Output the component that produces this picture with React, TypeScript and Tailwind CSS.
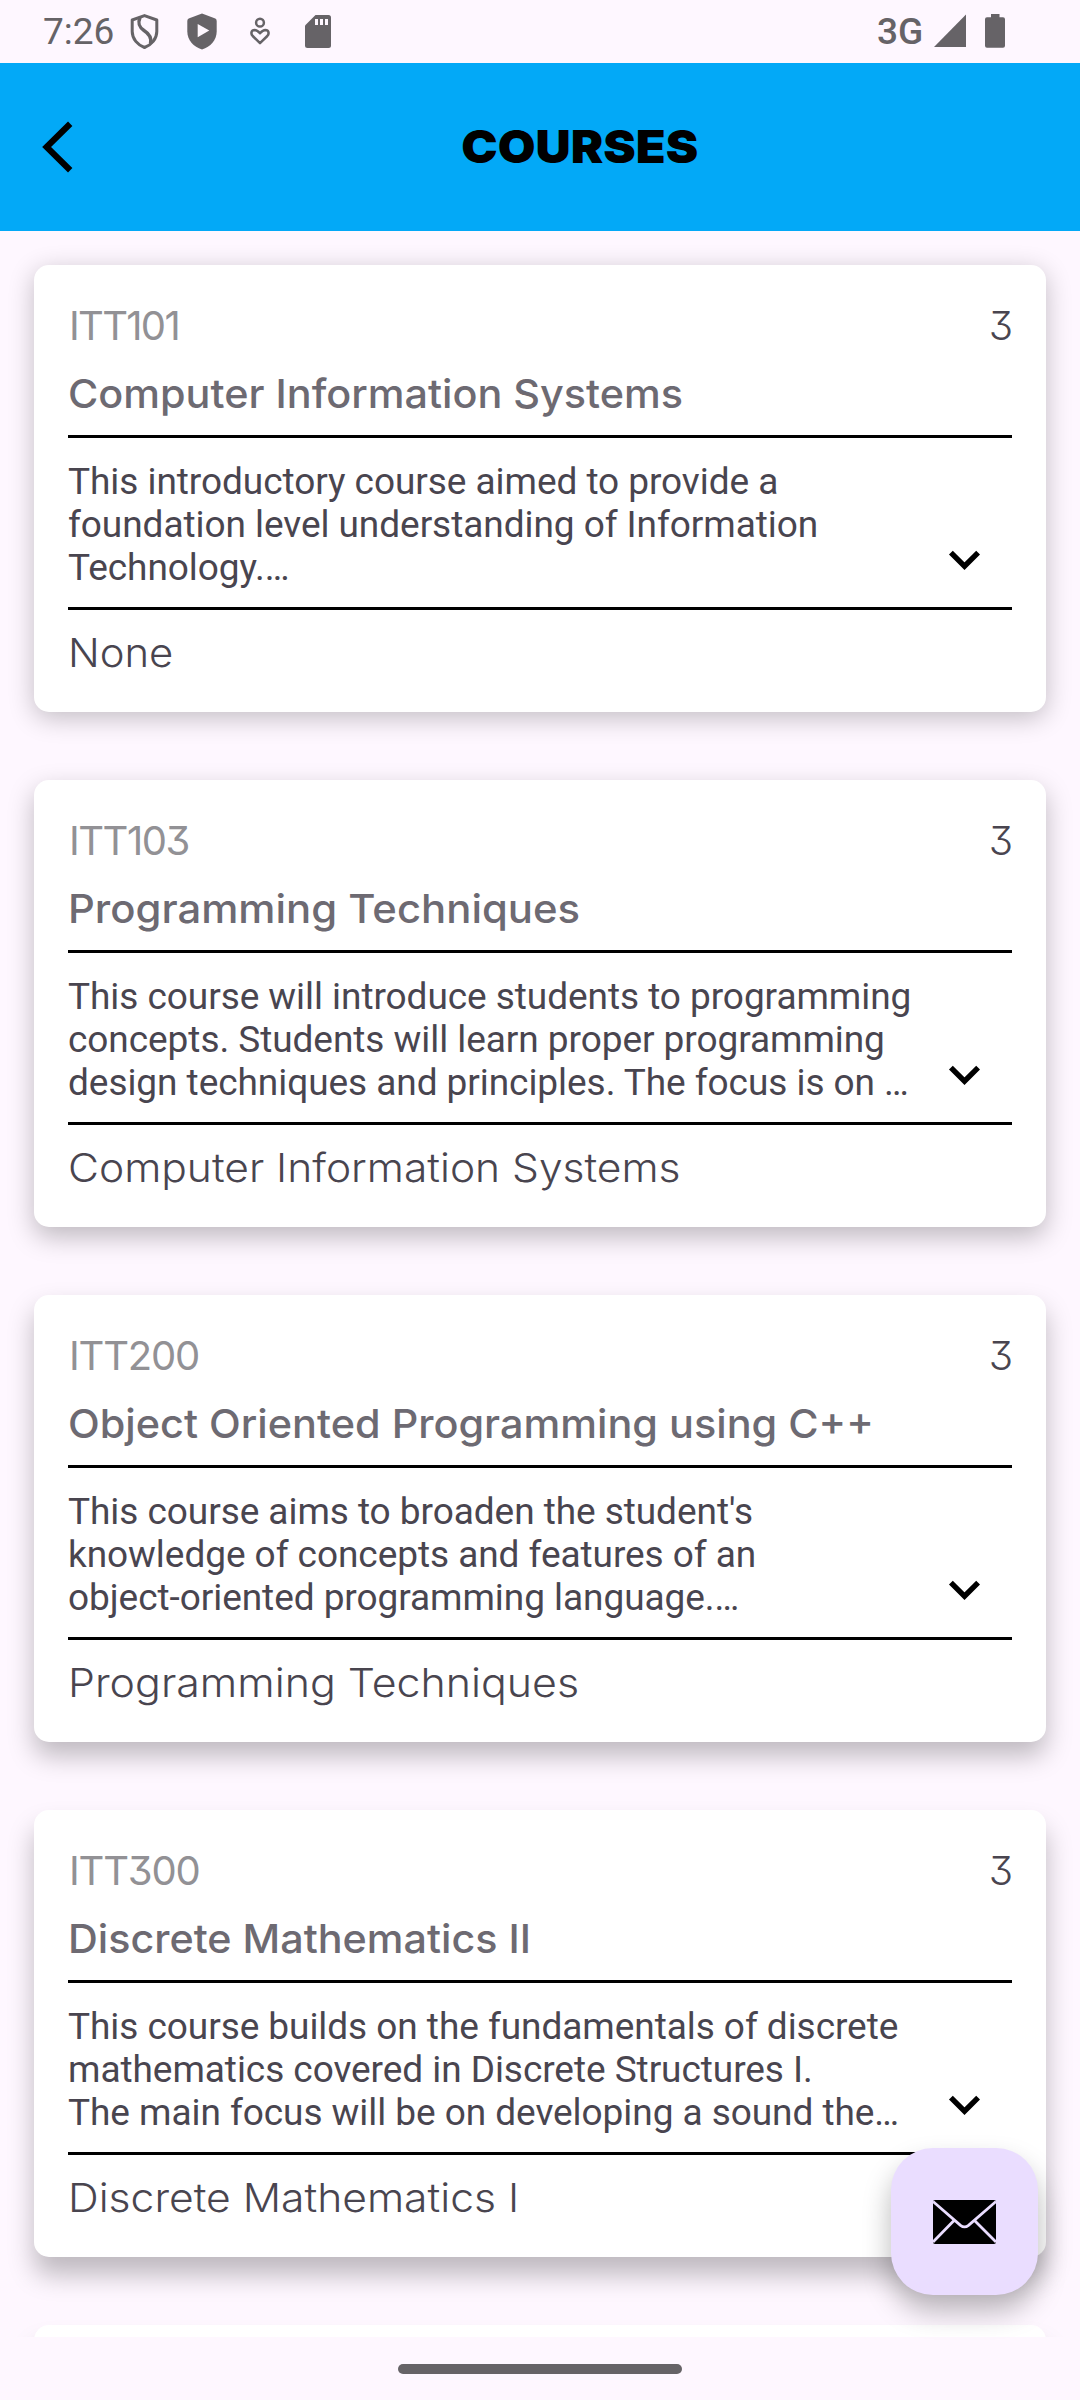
import React from "react";

type Course = {
  code: string;
  codeClass: string;
  credits: number;
  title: string;
  titleClass: string;
  description: string[];
  prerequisite: string;
  prerequisiteClass: string;
  shadowClass: string;
};

const courses: Course[] = [
  {
    code: "ITT101",
    codeClass: "tracking-[-1.7px]",
    credits: 3,
    title: "Computer Information Systems",
    titleClass: "scale-x-[1.034]",
    description: [
      "This introductory course aimed to provide a",
      "foundation level understanding of Information",
      "Technology.…",
    ],
    prerequisite: "None",
    prerequisiteClass: "scale-x-[1.045]",
    shadowClass: "shadow-[0_6px_26px_rgba(0,0,0,0.24)]",
  },
  {
    code: "ITT103",
    codeClass: "tracking-[-1.5px]",
    credits: 3,
    title: "Programming Techniques",
    titleClass: "scale-x-[1.046]",
    description: [
      "This course will introduce students to programming",
      "concepts. Students will learn proper programming",
      "design techniques and principles. The focus is on …",
    ],
    prerequisite: "Computer Information Systems",
    prerequisiteClass: "scale-x-[1.063]",
    shadowClass: "shadow-[0_10px_26px_rgba(0,0,0,0.25)]",
  },
  {
    code: "ITT200",
    codeClass: "tracking-[-1.2px]",
    credits: 3,
    title: "Object Oriented Programming using C++",
    titleClass: "scale-x-[1.035]",
    description: [
      "This course aims to broaden the student's",
      "knowledge of concepts and features of an",
      "object-oriented programming language.…",
    ],
    prerequisite: "Programming Techniques",
    prerequisiteClass: "scale-x-[1.072]",
    shadowClass: "shadow-[0_14px_26px_rgba(0,0,0,0.25)]",
  },
  {
    code: "ITT300",
    codeClass: "tracking-[-1.2px]",
    credits: 3,
    title: "Discrete Mathematics II",
    titleClass: "scale-x-[1.032]",
    description: [
      "This course builds on the fundamentals of discrete",
      "mathematics covered in Discrete Structures I.",
      "The main focus will be on developing a sound the…",
    ],
    prerequisite: "Discrete Mathematics I",
    prerequisiteClass: "scale-x-[1.065]",
    shadowClass: "shadow-[0_18px_26px_rgba(0,0,0,0.25)]",
  },
];

function StatusBar() {
  return (
    <div className="flex h-[63px] shrink-0 items-start justify-between pr-[75px] pl-[43px] text-[#666367]">
      <div className="flex items-start">
        <span className="mt-[10px] w-[87px] text-[37px] leading-[43px]">7:26</span>
        <svg className="mt-[13px]" width="29" height="37" viewBox="0 0 29 37" fill="none" stroke="currentColor" strokeWidth="3">
          <path d="M14.5 2.6 26.8 7v11.5c0 7.5-5.5 13.5-12.3 16C7.700 32 2.200 26 2.200 18.500V7Z" strokeLinejoin="round" />
          <path d="M10 4.500c-2.500 6-1 9.500 4 13 5.500 3.500 8 7 6.500 13" strokeWidth="3.400" />
        </svg>
        <svg className="mt-[13px] ml-[28px]" width="30" height="37" viewBox="0 0 30 37">
          <path d="M15 .6 28.300 5.500Q29.700 6.200 29.700 8v10.500c0 8.500-6.200 15.500-14.700 18C6.500 34 .3 27 .3 18.500V8q0-1.800 1.400-2.500Z" fill="currentColor" />
          <path d="M10.700 11v13.300L22.300 17.600Z" fill="#fef7ff" />
        </svg>
        <svg className="mt-[17px] ml-[32px]" width="22" height="29" viewBox="0 0 22 29" fill="none" stroke="currentColor" strokeWidth="2.500">
          <circle cx="11" cy="5.700" r="3.900" />
          <path d="M11 26.200 3.700 19C1.500 16.700 2.200 13 5.600 12.900c2.300 0 3.400 1 5.400 3.300 2-2.300 3.100-3.300 5.400-3.300 3.400.1 4.100 3.800 1.900 6.100Z" strokeLinejoin="round" />
        </svg>
        <svg className="mt-[15px] ml-[34px]" width="26" height="33" viewBox="0 0 26 33">
          <path d="M10.500 0H23.500Q26 0 26 2.500V30.500Q26 33 23.500 33H2.500Q0 33 0 30.500V10.500Z" fill="currentColor" />
          <path d="M10 4h3v6h-3zM15 4h3v6h-3zM20 4h3v6h-3z" fill="#fef7ff" />
        </svg>
      </div>
      <div className="flex items-start">
        <span className="mt-[10px] w-[57px] text-[37px] leading-[43px] font-medium">3G</span>
        <svg className="mt-[14px]" width="32" height="33" viewBox="0 0 32 33">
          <path d="M32 .500V33H0Z" fill="currentColor" />
        </svg>
        <svg className="mt-[14px] ml-[19px]" width="20" height="34" viewBox="0 0 20 34">
          <path d="M6 0h8.500v3.300H18Q20 3.300 20 5.300V31.700Q20 33.700 18 33.700H2Q0 33.700 0 31.700V5.300Q0 3.300 2 3.300H6Z" fill="currentColor" />
        </svg>
      </div>
    </div>
  );
}

function Header() {
  return (
    <header className="flex h-[168px] shrink-0 items-center bg-[#03a9f7]">
      <button aria-label="Back" className="flex w-[80px] shrink-0 justify-start pl-[42px]">
        <svg width="31" height="52" viewBox="0 0 31 52" fill="none" stroke="#000" strokeWidth="6.200">
          <path d="M28.200 2.700 4.600 26 28.200 49.300" />
        </svg>
      </button>
      <h1 className="flex-1 pb-[3px] text-center font-['Inter',sans-serif] text-[46px] leading-[56px] font-black text-black">
        <span className="inline-block scale-x-[1.06]">COURSES</span>
      </h1>
    </header>
  );
}

function CourseCard({ course }: { course: Course }) {
  return (
    <article className={"h-[447px] shrink-0 rounded-[15px] bg-white px-[34px] pt-[36px] " + course.shadowClass}>
      <div className="flex justify-between font-['Inter',sans-serif] text-[40px] leading-[49px] [font-feature-settings:'cv09'_1]">
        <span className={"pl-px text-[#929195] " + course.codeClass}>{course.code}</span>
        <span className="-mr-px font-light">{course.credits}</span>
      </div>
      <h2
        className={
          "mt-[19px] origin-left font-['Inter',sans-serif] text-[40px] leading-[49px] font-medium whitespace-nowrap text-[#6d6a72] " +
          course.titleClass
        }
      >
        {course.title}
      </h2>
      <div className="mt-[17px] h-[3px] bg-black" />
      <div className="mt-[22px] flex items-end justify-between pr-[31px]">
        <p className="text-[37px] leading-[43px] tracking-[-0.055px] whitespace-nowrap">
          {course.description.map((line) => (
            <span key={line} className="block">
              {line}
            </span>
          ))}
        </p>
        <svg className="mb-[19px] shrink-0" width="33" height="21" viewBox="0 0 33 21" fill="none" stroke="#000" strokeWidth="5.400">
          <path d="M2.900 3.600 16.500 17.100 30.100 3.600" />
        </svg>
      </div>
      <div className="mt-[18px] h-[3px] bg-black" />
      <p
        className={
          "mt-[18px] origin-left font-['Inter',sans-serif] text-[40px] leading-[49px] font-light whitespace-nowrap " +
          course.prerequisiteClass
        }
      >
        {course.prerequisite}
      </p>
    </article>
  );
}

export default function App() {
  return (
    <div className="relative flex h-[2400px] w-[1080px] flex-col overflow-hidden bg-[#fef7ff] font-['Roboto',sans-serif] text-[#49454f]">
      <StatusBar />
      <Header />
      <main className="flex h-[2106px] shrink-0 flex-col gap-[68px] overflow-hidden px-[34px] pt-[34px]">
        {courses.map((course) => (
          <CourseCard key={course.code} course={course} />
        ))}
        <div className="h-[447px] shrink-0 rounded-[15px] bg-white shadow-[0_22px_26px_rgba(0,0,0,0.25)]" />
      </main>
      <div className="flex h-[63px] shrink-0 items-start justify-center pt-[27px]">
        <div className="h-[10px] w-[284px] rounded-full bg-[#666367]" />
      </div>
      <button
        aria-label="Send mail"
        className="absolute right-[42px] bottom-[105px] flex h-[147px] w-[147px] items-center justify-center rounded-[42px] bg-[#eaddff] shadow-[0_16px_28px_rgba(0,0,0,0.28)]"
      >
        <svg width="63" height="44" viewBox="0 0 63 44">
          <rect width="63" height="44" rx="2" fill="#000" />
          <path d="M0 1.500 27.500 25.300Q31.500 28.400 35.500 25.300L63 1.500M0 42 21 20.500M63 42 41.500 20.500" fill="none" stroke="#eaddff" strokeWidth="2.800" />
        </svg>
      </button>
    </div>
  );
}
